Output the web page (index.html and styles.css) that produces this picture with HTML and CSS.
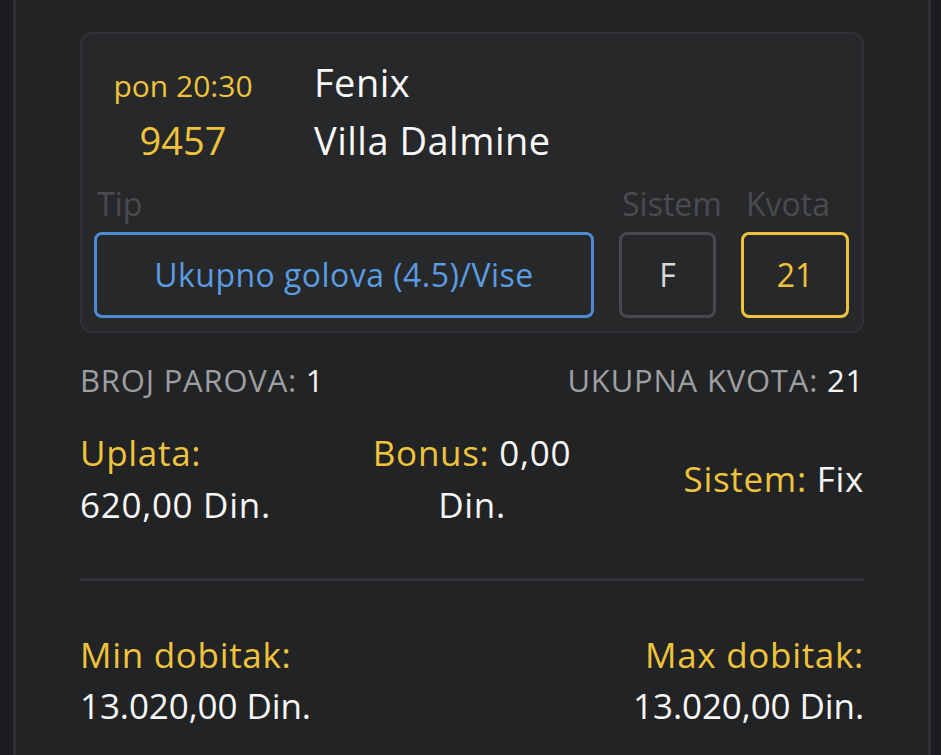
FILE: index.html
```html
<!DOCTYPE html>
<html lang="sr">
<head>
<meta charset="utf-8">
<title>Tiket</title>
<link rel="stylesheet" href="styles.css">
</head>
<body>
<div class="frame">
  <section class="card">
    <div class="match">
      <span class="time">pon 20:30</span>
      <span class="team">Fenix</span>
      <span class="code">9457</span>
      <span class="team">Villa Dalmine</span>
    </div>
    <div class="picks">
      <span class="label">Tip</span>
      <span class="label">Sistem</span>
      <span class="label">Kvota</span>
      <div class="box box-tip">Ukupno golova (4.5)/Vise</div>
      <div class="box box-sys">F</div>
      <div class="box box-odd">21</div>
    </div>
  </section>

  <div class="stats">
    <span class="stat">BROJ PAROVA: <b>1</b></span>
    <span class="stat">UKUPNA KVOTA: <b>21</b></span>
  </div>

  <div class="pay">
    <div class="pay-left"><span class="y">Uplata:</span><br>620,00 Din.</div>
    <div class="pay-mid"><span class="y">Bonus:</span> 0,00<br>Din.</div>
    <div class="pay-right"><span class="y">Sistem:</span> Fix</div>
  </div>

  <hr class="divider">

  <div class="win">
    <div class="win-left"><span class="y">Min dobitak:</span><br><span class="num">13.020,00 Din.</span></div>
    <div class="win-right"><span class="y">Max dobitak:</span><br><span class="num">13.020,00 Din.</span></div>
  </div>
</div>
</body>
</html>
```

FILE: styles.css
```css
html, body {
  margin: 0;
  padding: 0;
  background: #1b1d20;
}

body {
  font-family: "Open Sans", "Liberation Sans", sans-serif;
  color: #f6f6f6;
  overflow: hidden;
}

.frame {
  margin: 0 10px 0 13px;
  min-height: 100vh;
  box-sizing: border-box;
  background: #222325;
  border-left: 3px solid #2d2f32;
  border-right: 3px solid #2d2f32;
  padding: 32px 64px 0 64px;
}

.card {
  background: #27282a;
  border: 2px solid #303134;
  border-radius: 12px;
  padding: 21px 13px 13px 12px;
}

.match {
  display: grid;
  grid-template-columns: 178px 1fr;
  column-gap: 42px;
  align-items: baseline;
  line-height: 54px;
}

.time {
  font-size: 30px;
  color: #f0c33c;
  text-align: center;
}

.code {
  font-size: 38px;
  color: #f0c33c;
  text-align: center;
}

.team {
  font-size: 38px;
  color: #f8f8f8;
  letter-spacing: 0.5px;
}

.picks {
  margin-top: 19px;
  display: grid;
  grid-template-columns: 1fr 97px 108px;
  column-gap: 25px;
  row-gap: 10px;
}

.label {
  font-size: 32px;
  line-height: 36px;
  color: #4a4b4e;
  padding-left: 3px;
  white-space: nowrap;
}

.label:nth-child(3) {
  padding-left: 5px;
}

.box {
  height: 86px;
  box-sizing: border-box;
  border: 3px solid #48494c;
  border-radius: 8px;
  display: flex;
  align-items: center;
  justify-content: center;
  font-size: 32px;
  line-height: 44px;
}

.box-tip {
  border-color: #4c8bd3;
  color: #5b9be0;
  letter-spacing: 0.45px;
}

.box-sys {
  color: #d9d9d9;
}

.box-odd {
  border-color: #edc23c;
  color: #f0c33c;
}

.stats {
  margin-top: 27px;
  display: flex;
  justify-content: space-between;
  font-size: 31px;
  line-height: 40px;
  color: #9e9fa1;
  letter-spacing: 0.8px;
}

.stat b {
  font-weight: 400;
  color: #f6f6f6;
}

.pay {
  margin-top: 27px;
  display: grid;
  grid-template-columns: 1fr 240px 1fr;
  align-items: center;
  font-size: 35px;
  line-height: 52px;
  letter-spacing: 0.7px;
}

.pay-mid {
  text-align: center;
}

.pay-right {
  text-align: right;
}

.y {
  color: #f0c33c;
}

.divider {
  margin: 47px 0 0 0;
  border: 0;
  height: 3px;
  background: #2f3033;
}

.win {
  margin-top: 48px;
  display: flex;
  justify-content: space-between;
  font-size: 35px;
  line-height: 51px;
  letter-spacing: 0.7px;
}

.win .num {
  letter-spacing: -0.1px;
}

.win-right {
  text-align: right;
}
```
